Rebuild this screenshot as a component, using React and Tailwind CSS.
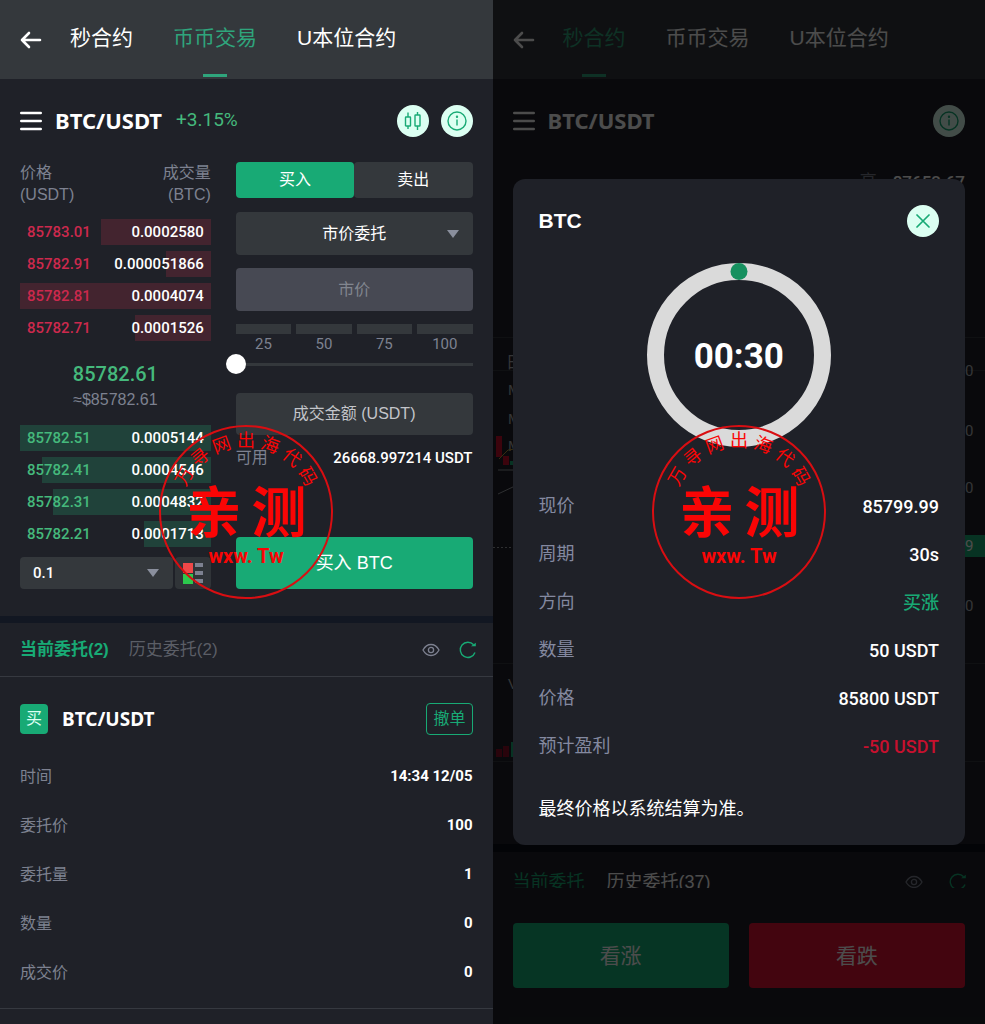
import React, { useState } from 'react';

const num = "font-[Roboto,'Noto_Sans_CJK_SC',sans-serif]";
const pairFont = "font-['Noto_Sans','Open_Sans',sans-serif]";

const asks = [
  { price: '85783.01', amount: '0.0002580', depth: 57.5 },
  { price: '85782.91', amount: '0.000051866', depth: 23.5 },
  { price: '85782.81', amount: '0.0004074', depth: 100 },
  { price: '85782.71', amount: '0.0001526', depth: 39.5 },
];

const bids = [
  { price: '85782.51', amount: '0.0005144', depth: 100 },
  { price: '85782.41', amount: '0.0004546', depth: 88.5 },
  { price: '85782.31', amount: '0.0004832', depth: 82.5 },
  { price: '85782.21', amount: '0.0001713', depth: 35 },
];

const orderRows = [
  ['时间', '14:34 12/05'],
  ['委托价', '100'],
  ['委托量', '1'],
  ['数量', '0'],
  ['成交价', '0'],
];

const dealRows = [
  { label: '现价', value: '85799.99', color: 'text-white' },
  { label: '周期', value: '30s', color: 'text-white' },
  { label: '方向', value: '买涨', color: 'text-[#18aa75]' },
  { label: '数量', value: '50 USDT', color: 'text-white' },
  { label: '价格', value: '85800 USDT', color: 'text-white' },
  { label: '预计盈利', value: '-50 USDT', color: 'text-[#c8102e]' },
];

function Caret() {
  return (
    <svg className="pointer-events-none absolute right-[14px] top-1/2 -translate-y-1/2" width="12" height="8" viewBox="0 0 12 8">
      <path d="M0 0h12L6 8z" fill="#8a8f9d" />
    </svg>
  );
}

function BackIcon() {
  return (
    <svg width="22" height="18" viewBox="0 0 22 18" fill="none" stroke="white" strokeWidth="2.6" strokeLinecap="round" strokeLinejoin="round">
      <path d="M9 2L2 9l7 7M2 9h18" />
    </svg>
  );
}

function MenuIcon() {
  return (
    <svg width="22" height="20" viewBox="0 0 22 20" stroke="white" strokeWidth="2.4" strokeLinecap="round">
      <path d="M1.2 2h19.6M1.2 10h19.6M1.2 18h19.6" />
    </svg>
  );
}

function CandleIcon() {
  return (
    <svg width="18" height="20" viewBox="0 0 18 20" fill="none" stroke="#18aa75" strokeWidth="1.4">
      <rect x="1.5" y="6" width="5" height="9" rx="0.5" />
      <path d="M4 1.5V6M4 15v3" />
      <rect x="11" y="4" width="5" height="11" rx="0.5" />
      <path d="M13.5 1v3M13.5 15v4" />
    </svg>
  );
}

function InfoIcon() {
  return (
    <svg width="20" height="20" viewBox="0 0 20 20" fill="none" stroke="#18aa75" strokeWidth="1.4">
      <circle cx="10" cy="10" r="9" />
      <path d="M10 8.5v6" />
      <circle cx="10" cy="5.8" r="0.5" />
    </svg>
  );
}

function EyeIcon() {
  return (
    <svg width="18" height="14" viewBox="0 0 18 14" fill="none" stroke="#7d8190" strokeWidth="1.3">
      <path d="M1 7c2-3.7 4.8-5.5 8-5.5S15 3.3 17 7c-2 3.7-4.8 5.5-8 5.5S3 10.7 1 7z" />
      <circle cx="9" cy="7" r="2.6" />
    </svg>
  );
}

function RefreshIcon() {
  return (
    <svg width="18" height="18" viewBox="0 0 18 18" fill="none" stroke="#18aa75" strokeWidth="1.4">
      <path d="M14.6 3.8A7.6 7.6 0 1 0 16 11.5" />
      <path d="M12 5.3h4.8V1.8z" fill="#18aa75" stroke="none" />
    </svg>
  );
}

function TopTabs({ active }) {
  const tabs = ['秒合约', '币币交易', 'U本位合约'];
  return (
    <header className="flex h-[79px] shrink-0 items-stretch bg-[#34383c] pl-5">
      <button aria-label="返回" className="mr-7">
        <BackIcon />
      </button>
      <nav className="flex gap-10">
        {tabs.map((t) => (
          <a
            key={t}
            href="#"
            className={`relative flex items-center pb-1 text-[21px] whitespace-nowrap ${
              t === active ? 'text-[#2fa57c]' : 'text-white'
            }`}
          >
            {t}
            {t === active && (
              <span className="absolute bottom-[2px] left-1/2 h-[3px] w-6 -translate-x-1/2 bg-[#2fa57c]" />
            )}
          </a>
        ))}
      </nav>
    </header>
  );
}

function PairBar({ change, chart }) {
  return (
    <div className="flex h-[83px] shrink-0 items-center px-5">
      <button aria-label="菜单"><MenuIcon /></button>
      <h1 className={`ml-[13px] text-[22px] font-bold text-white ${pairFont}`}>BTC/USDT</h1>
      {change && <span className={`ml-[14px] text-[19px] text-[#45b97c] ${num}`}>{change}</span>}
      <div className="ml-auto flex gap-3">
        {chart && (
          <button aria-label="K线" className="flex size-8 items-center justify-center rounded-full bg-[#dcfff2]">
            <CandleIcon />
          </button>
        )}
        <button aria-label="详情" className="flex size-8 items-center justify-center rounded-full bg-[#dcfff2]">
          <InfoIcon />
        </button>
      </div>
    </div>
  );
}

function DepthList({ rows, side }) {
  const isAsk = side === 'ask';
  return (
    <ul className={`flex flex-col gap-[6px] text-[15px] font-medium ${num}`}>
      {rows.map((r) => (
        <li key={r.price} className="relative flex h-[26px] items-center justify-between px-[7px]">
          <span
            className={`absolute inset-y-0 right-0 ${isAsk ? 'bg-[#43242f]' : 'bg-[#20423a]'}`}
            style={{ width: `${r.depth}%` }}
          />
          <span className={`relative ${isAsk ? 'text-[#cc294d]' : 'text-[#45b97c]'}`}>{r.price}</span>
          <span className="relative text-white">{r.amount}</span>
        </li>
      ))}
    </ul>
  );
}

function OrderBook() {
  return (
    <section className="flex flex-col">
      <div className="flex justify-between text-[16px] leading-[22px] text-[#7d8190]">
        <span>价格<br />(USDT)</span>
        <span className="text-right">成交量<br />(BTC)</span>
      </div>
      <div className="mt-[13px]"><DepthList rows={asks} side="ask" /></div>
      <div className="mt-5 mb-[13px] text-center">
        <p className={`text-[20px] leading-[27px] font-medium text-[#45b97c] ${num}`}>85782.61</p>
        <p className="text-[16px] leading-6 text-[#7d8190]">≈$85782.61</p>
      </div>
      <DepthList rows={bids} side="bid" />
      <div className="mt-[10px] flex h-8 gap-[2px]">
        <label className="relative flex-1">
          <span className="sr-only">深度</span>
          <select className={`h-full w-full appearance-none rounded-sm bg-[#34383c] px-[13px] text-[15px] font-medium text-white ${num}`}>
            <option>0.1</option>
          </select>
          <Caret />
        </label>
        <button aria-label="盘口显示" className="flex w-9 items-center justify-center rounded-sm bg-[#303438]">
          <svg width="20" height="21" viewBox="0 0 20 21">
            <path d="M0 0h10v10H0z" fill="#f04848" />
            <path d="M0 11h10v10H0z" fill="#2cc84d" />
            <path d="M12 0h8v4h-8zM12 8h8v4h-8zM12 16h8v4h-8z" fill="#7d8190" />
          </svg>
        </button>
      </div>
    </section>
  );
}

function TradeForm() {
  const [percent, setPercent] = useState(0);
  return (
    <form className="flex flex-col text-[16px]">
      <div className="flex h-9 shrink-0">
        <button type="button" className="flex-1 rounded-sm bg-[#18aa75] text-white">买入</button>
        <button type="button" className="flex-1 rounded-sm bg-[#34383c] text-white">卖出</button>
      </div>
      <label className="relative mt-[14px] h-[43px]">
        <span className="sr-only">委托类型</span>
        <select className="h-full w-full appearance-none rounded-sm bg-[#34383c] text-center text-white">
          <option>市价委托</option>
        </select>
        <Caret />
      </label>
      <input
        aria-label="价格"
        placeholder="市价"
        disabled
        className="mt-[13px] h-[43px] rounded-sm bg-[#474953] text-center placeholder:text-[#82868f]"
      />
      <div className="mt-[13px] grid grid-cols-4 gap-[5px]">
        {[25, 50, 75, 100].map((p) => (
          <button key={p} type="button" onClick={() => setPercent(p)} className={`text-[15px] text-[#7d8190] ${num}`}>
            <span className="block h-[10px] bg-[#34383c]" />
            <span className="block leading-5">{p}</span>
          </button>
        ))}
      </div>
      <div className="relative flex h-5 items-center">
        <span className="h-[3px] w-full bg-[#34383c]" />
        <input
          type="range"
          aria-label="仓位比例"
          value={percent}
          onChange={(e) => setPercent(Number(e.target.value))}
          className="absolute inset-y-0 -left-[10px] w-[calc(100%+20px)] appearance-none bg-transparent [&::-webkit-slider-thumb]:size-5 [&::-webkit-slider-thumb]:appearance-none [&::-webkit-slider-thumb]:rounded-full [&::-webkit-slider-thumb]:bg-white"
        />
      </div>
      <input
        aria-label="成交金额"
        placeholder="成交金额 (USDT)"
        className="mt-[19px] h-[42px] rounded-sm bg-[#34383c] text-center text-white placeholder:text-[#c3c5ca]"
      />
      <div className="mt-[11px] flex h-6 items-center justify-between">
        <span className="text-[#7d8190]">可用</span>
        <span className={`text-[15px] font-medium text-white ${num}`}>26668.997214 USDT</span>
      </div>
      <button type="button" className="mt-auto h-[52px] rounded-sm bg-[#18aa75] text-[18px] text-white">买入 BTC</button>
    </form>
  );
}

function Orders() {
  return (
    <section>
      <div className="flex h-[54px] items-center border-b border-[#363940] pr-4 pl-5 text-[17px]">
        <button className="font-bold text-[#18aa75]">当前委托(2)</button>
        <button className="ml-5 text-[#5b5e66]">历史委托(2)</button>
        <button aria-label="显示" className="ml-auto"><EyeIcon /></button>
        <button aria-label="刷新" className="ml-[19px]"><RefreshIcon /></button>
      </div>
      <article className="border-b border-[#363940] px-5 pt-[26px] pb-[11px]">
        <div className="flex h-8 items-center">
          <span className="flex h-[30px] w-7 items-center justify-center rounded-sm bg-[#18aa75] text-[16px] text-[#dcfff2]">买</span>
          <h2 className={`ml-[14px] text-[19px] font-bold text-white ${pairFont}`}>BTC/USDT</h2>
          <button className="ml-auto h-8 rounded-sm border border-[#18aa75] px-[6px] text-[16px] text-[#18aa75]">撤单</button>
        </div>
        <dl className="mt-[17px]">
          {orderRows.map(([label, value]) => (
            <div key={label} className="flex h-[49px] items-center justify-between">
              <dt className="text-[16px] text-[#7d8190]">{label}</dt>
              <dd className={`text-[15px] font-bold text-white ${num}`}>{value}</dd>
            </div>
          ))}
        </dl>
      </article>
    </section>
  );
}

// circular red seal laid over each phone
function Stamp() {
  const arc = ['万', '寻', '网', '出', '海', '代', '码'];
  return (
    <div className="pointer-events-none absolute inset-0 z-20 flex items-center justify-center">
      <svg width="176" height="176" viewBox="-88 -88 176 176" fill="#fa0505" textAnchor="middle" className="font-['Noto_Sans_CJK_SC',sans-serif]">
        <circle r="86" fill="none" stroke="#d90e12" strokeWidth="2" />
        {arc.map((c, i) => (
          <text key={c} y="-65" fontSize="18" transform={`rotate(${(i - 3) * 20})`}>{c}</text>
        ))}
        <text x="-32" y="20" fontSize="55" fontWeight="700">亲</text>
        <text x="33" y="20" fontSize="55" fontWeight="700">测</text>
        <text y="51" fontSize="20" fontWeight="700" className="font-[Roboto,sans-serif]">wxw. Tw</text>
      </svg>
    </div>
  );
}

function Chart() {
  return (
    <svg width="100%" height="507" fill="#b0b3ba" fontSize="15" className="block">
      <g stroke="#33363e">
        <path d="M0 0.5h493M0 33.5h493M0 326.5h493M0 424.5h493" />
      </g>
      <path d="M0 210.5h493" stroke="#9a9da5" strokeDasharray="2 2" />
      <g className="font-['Liberation_Sans','Noto_Sans_CJK_SC',sans-serif]">
        <text x="13" y="31" fontSize="16">日</text>
        <text x="15" y="58">M</text>
        <text x="15" y="87">M</text>
        <text x="15" y="114">M</text>
        <text x="15" y="352">V</text>
      </g>
      <path d="M3 99h6v21H3zM10 119h6v9h-6z" fill="#c8102e" />
      <path d="M17 124h6v4h-6z" fill="#18aa75" />
      <path d="M6 122l9-9 14-2" fill="none" stroke="#b89a3c" />
      <path d="M5 133h15M5 157l17-8" fill="none" stroke="#9a9da5" />
      <path d="M3 412h6v8H3zM10 409h6v11h-6z" fill="#8a1028" />
      <path d="M18 405h6v15h-6z" fill="#18aa75" />
      <rect y="198" width="70" height="22" fill="#18aa75" className="[x:calc(100%-70px)]" />
      <g textAnchor="end" className="[transform:translateX(-12px)] font-[Roboto,sans-serif]">
        <text x="100%" y="39">0</text>
        <text x="100%" y="99">0</text>
        <text x="100%" y="156">0</text>
        <text x="100%" y="214" fill="#fff">9</text>
        <text x="100%" y="274">0</text>
      </g>
    </svg>
  );
}

function Countdown() {
  return (
    <div className="relative mx-auto mt-[26px] flex size-[184px] items-center justify-center">
      <svg className="absolute inset-0" width="184" height="184" viewBox="0 0 184 184">
        <circle cx="92" cy="92" r="83.5" fill="none" stroke="#dadada" strokeWidth="17" />
        <circle cx="92" cy="8.5" r="8.5" fill="#16905f" />
      </svg>
      <span className={`relative pt-1 text-[35px] font-bold text-white ${num}`}>00:30</span>
    </div>
  );
}

function DealDialog() {
  return (
    <div className="absolute inset-0 z-10 flex items-center bg-black/70 px-5">
      <div role="dialog" aria-label="BTC" className="w-full rounded-xl bg-[#1f2128] px-[26px] pt-[26px] pb-[22px]">
        <div className="flex h-8 items-center justify-between">
          <h2 className="text-[21px] font-bold text-white">BTC</h2>
          <button aria-label="关闭" className="flex size-8 items-center justify-center rounded-full bg-[#dcfff2]">
            <svg width="14" height="14" viewBox="0 0 14 14" stroke="#18aa75" strokeWidth="1.7" strokeLinecap="round">
              <path d="M1 1l12 12M13 1L1 13" />
            </svg>
          </button>
        </div>
        <Countdown />
        <dl className="mt-[35px]">
          {dealRows.map((r) => (
            <div key={r.label} className="flex h-12 items-center justify-between text-[18px]">
              <dt className="text-[#8489a0]">{r.label}</dt>
              <dd className={`font-medium ${num} ${r.color}`}>{r.value}</dd>
            </div>
          ))}
        </dl>
        <p className="mt-[25px] text-[18px] leading-7 text-white">最终价格以系统结算为准。</p>
      </div>
    </div>
  );
}

function SpotScreen() {
  return (
    <div className="relative min-h-screen bg-[#1f2128]">
      <TopTabs active="币币交易" />
      <PairBar change="+3.15%" chart />
      <div className="grid grid-cols-[191fr_237fr] gap-[25px] px-5 pb-[27px]">
        <OrderBook />
        <TradeForm />
      </div>
      <div className="h-[7px] bg-[#121722]" />
      <Orders />
      <Stamp />
    </div>
  );
}

function SecondsScreen() {
  return (
    <div className="sticky top-0 flex h-screen flex-col overflow-hidden bg-[#1f2128]">
      <TopTabs active="秒合约" />
      <PairBar />
      <div className="min-h-0 flex-1 overflow-hidden">
        <div className="flex h-[175px] justify-end gap-4 px-5 pt-2 text-[17px] leading-6">
          <span className="text-[#7d8190]">高</span>
          <span className={`font-medium text-white ${num}`}>87652.67</span>
        </div>
        <Chart />
        <div className="h-2 bg-[#0c101a]" />
        <div className="flex h-[60px] items-center pr-[18px] pl-5 text-[18px]">
          <button className="text-[#18aa75]">当前委托</button>
          <button className="ml-[22px] text-white">历史委托(37)</button>
          <button aria-label="显示" className="ml-auto"><EyeIcon /></button>
          <button aria-label="刷新" className="ml-[26px]"><RefreshIcon /></button>
        </div>
      </div>
      <footer className="flex shrink-0 gap-5 px-5 pt-[35px] pb-9">
        <button className="h-[65px] flex-1 rounded-sm bg-[#14b178] text-[21px] text-white">看涨</button>
        <button className="h-[65px] flex-1 rounded-sm bg-[#e01134] text-[21px] text-white">看跌</button>
      </footer>
      <DealDialog />
      <Stamp />
    </div>
  );
}

export default function App() {
  return (
    <main className="grid min-h-screen grid-cols-2 items-start bg-[#1f2128] font-['Liberation_Sans','Noto_Sans_CJK_SC',sans-serif]">
      <SpotScreen />
      <SecondsScreen />
    </main>
  );
}
